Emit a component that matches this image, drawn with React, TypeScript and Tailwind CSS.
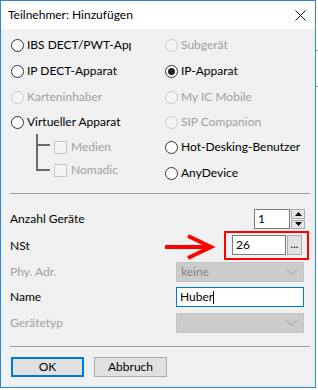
import React from "react";

type RadioProps = { label: string; checked?: boolean; disabled?: boolean; clip?: boolean };

function Radio({ label, checked, disabled, clip }: RadioProps) {
  return (
    <div className="flex items-center h-full">
      <span
        className={`w-[13px] h-[13px] rounded-full border flex items-center justify-center shrink-0 ${
          disabled ? "border-[#c6c6c6] bg-[#f4f4f4]" : "border-[#333333] bg-white"
        }`}
      >
        {checked && <span className="w-[7px] h-[7px] rounded-full bg-[#222222]" />}
      </span>
      <span
        className={`ml-[3px] whitespace-nowrap ${clip ? "w-[104px] overflow-hidden" : ""} ${
          disabled ? "text-[#a0a0a0]" : "text-black"
        }`}
      >
        {label}
      </span>
    </div>
  );
}

function Check({ label }: { label: string }) {
  return (
    <div className="flex items-center h-full">
      <span className="w-[13px] h-[13px] border border-[#c6c6c6] bg-[#f4f4f4] shrink-0" />
      <span className="ml-[4px] text-[#a0a0a0]">{label}</span>
    </div>
  );
}

function Chevron() {
  return (
    <svg width="11" height="7" viewBox="0 0 11 7" className="mr-[6px]">
      <polyline points="0.5,0.5 5.5,5.5 10.5,0.5" fill="none" stroke="#b0b0b0" strokeWidth="1.2" />
    </svg>
  );
}

export default function App() {
  return (
    <div className="w-[318px] h-[390px] bg-white relative flex font-['Lato',sans-serif] text-[12px] leading-none text-black">
      {/* Window */}
      <div className="w-[316px] h-[388px] border border-[#2b86d3] flex flex-col bg-[#f0f0f0]">
        {/* Title bar */}
        <div className="h-[28px] bg-white flex items-center justify-between pl-[7px] pr-[9px] shrink-0">
          <span>Teilnehmer: Hinzufügen</span>
          <svg width="11" height="11" viewBox="0 0 11 11">
            <path d="M0.5 0.5 L10.5 10.5 M10.5 0.5 L0.5 10.5" stroke="#111" strokeWidth="1" />
          </svg>
        </div>

        {/* Radio section */}
        <div className="h-[164px] pt-[3px] pl-[10px] flex shrink-0">
          <div className="w-[154px] flex flex-col">
            <div className="h-[26px]"><Radio label="IBS DECT/PWT-Apparat" clip /></div>
            <div className="h-[26px]"><Radio label="IP DECT-Apparat" /></div>
            <div className="h-[26px]"><Radio label="Karteninhaber" disabled /></div>
            <div className="h-[24px]"><Radio label="Virtueller Apparat" /></div>
            <div className="flex pl-[25px]">
              <svg width="18" height="46" viewBox="0 0 18 46" className="shrink-0">
                <path d="M1 -1 V37 M1 11 H14 M1 36 H14" stroke="#6a6a6a" strokeWidth="2" fill="none" />
              </svg>
              <div className="flex flex-col">
                <div className="h-[26px]"><Check label="Medien" /></div>
                <div className="h-[20px]"><Check label="Nomadic" /></div>
              </div>
            </div>
          </div>
          <div className="flex flex-col">
            <div className="h-[26px]"><Radio label="Subgerät" disabled /></div>
            <div className="h-[26px]"><Radio label="IP-Apparat" checked /></div>
            <div className="h-[26px]"><Radio label="My IC Mobile" disabled /></div>
            <div className="h-[24px]"><Radio label="SIP Companion" disabled /></div>
            <div className="h-[26px]"><Radio label="Hot-Desking-Benutzer" /></div>
            <div className="h-[26px]"><Radio label="AnyDevice" /></div>
          </div>
        </div>

        <div className="ml-[9px] w-[300px] h-px bg-[#a0a0a0] shrink-0" />

        {/* Form */}
        <div className="pl-[9px] pr-[10px] flex flex-col">
          <div className="mt-[15px] h-[20px] flex items-center justify-between">
            <span>Anzahl Geräte</span>
            <div className="flex items-stretch h-full">
              <div className="w-[36px] border border-[#7a7a7a] bg-white flex items-center pl-[3px]">1</div>
              <div className="ml-px w-[14px] flex flex-col gap-px">
                <div className="flex-1 border border-[#adadad] bg-[#e5e5e5] flex items-center justify-center">
                  <svg width="7" height="4" viewBox="0 0 7 4"><polygon points="3.5,0 7,4 0,4" fill="#000" /></svg>
                </div>
                <div className="flex-1 border border-[#adadad] bg-[#e5e5e5] flex items-center justify-center">
                  <svg width="7" height="4" viewBox="0 0 7 4"><polygon points="0,0 7,0 3.5,4" fill="#000" /></svg>
                </div>
              </div>
            </div>
          </div>

          <div className="mt-[2px] h-[29px] flex items-center justify-between">
            <span>NSt</span>
            <div className="h-full -mr-[4px] border-2 border-[#ff0000] pl-[6px] pr-[5px] pt-[2px] pb-[3px] flex">
              <div className="w-[54px] border border-[#7a7a7a] bg-white flex items-center pl-[3px]">26</div>
              <div className="ml-px w-[15px] border border-[#adadad] bg-[#e1e1e1] flex items-end justify-center pb-[5px] text-[11px]">...</div>
            </div>
          </div>

          <div className="mt-[2px] h-[20px] flex items-center justify-between">
            <span className="text-[#a0a0a0]">Phy. Adr.</span>
            <div className="w-[128px] h-full mr-px bg-[#cccccc] border border-[#c4c4c4] flex items-center justify-between pl-[4px]">
              <span className="text-[#838383]">keine</span>
              <Chevron />
            </div>
          </div>

          <div className="mt-[5px] h-[20px] flex items-center justify-between">
            <span>Name</span>
            <div className="w-[128px] h-full mr-px bg-white border border-[#0078d7] flex items-center pl-[3px]">
              <span>Huber</span>
              <span className="w-px h-[13px] bg-black" />
            </div>
          </div>

          <div className="mt-[6px] h-[20px] flex items-center justify-between">
            <span className="text-[#a0a0a0]">Gerätetyp</span>
            <div className="w-[128px] h-full mr-px bg-[#cccccc] border border-[#c4c4c4] flex items-center justify-end">
              <Chevron />
            </div>
          </div>
        </div>

        <div className="mt-[13px] ml-[9px] w-[300px] h-px bg-[#a0a0a0] shrink-0" />

        <div className="mt-[10px] pl-[10px] flex gap-[10px]">
          <button className="w-[73px] h-[20px] border-2 border-[#0078d7] bg-[#e1e1e1] flex items-center justify-center">OK</button>
          <button className="w-[73px] h-[20px] border border-[#adadad] bg-[#e1e1e1] flex items-center justify-center">Abbruch</button>
        </div>
      </div>

      {/* Background window edge */}
      <div className="flex-1 flex flex-col">
        <div className="h-[50px]" />
        <div className="h-px bg-[#9a9a9a]" />
        <div className="h-[35px]" />
        <div className="h-px bg-[#9a9a9a]" />
      </div>

      {/* Annotation arrow */}
      <svg width="52" height="26" viewBox="0 0 52 26" className="absolute left-[164px] top-[234px]">
        <path d="M1 13 H44" stroke="#ff0000" strokeWidth="4" />
        <polyline points="24,2 47,13 24,24" fill="none" stroke="#ff0000" strokeWidth="4" strokeLinejoin="miter" />
      </svg>
    </div>
  );
}
